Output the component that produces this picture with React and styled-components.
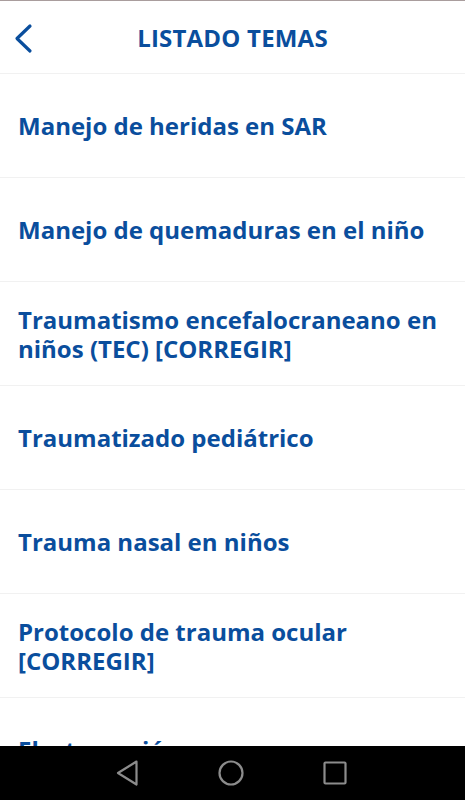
import React from "react";
import styled, { createGlobalStyle } from "styled-components";

const BLUE = "#0a4e9d";
const NAV_GREY = "#8c8c8c";

const topics = [
  "Manejo de heridas en SAR",
  "Manejo de quemaduras en el niño",
  "Traumatismo encefalocraneano en niños (TEC) [CORREGIR]",
  "Traumatizado pediátrico",
  "Trauma nasal en niños",
  "Protocolo de trauma ocular [CORREGIR]",
  "Electrocución",
];

const GlobalStyle = createGlobalStyle`
  html, body {
    margin: 0;
    padding: 0;
    background: #ffffff;
  }
  body {
    font-family: "Open Sans", "Noto Sans", sans-serif;
  }
`;

export default function App() {
  return (
    <>
      <GlobalStyle />
      <Screen>
        <StatusEdge />
        <Header>
          <BackButton aria-label="Volver">
            <svg width="20" height="32" viewBox="0 0 20 32">
              <path
                d="M16 4 L3 16.5 L16 29"
                fill="none"
                stroke={BLUE}
                strokeWidth="3.2"
                strokeLinecap="round"
                strokeLinejoin="round"
              />
            </svg>
          </BackButton>
          <Title>LISTADO TEMAS</Title>
        </Header>
        <List>
          {topics.map((t) => (
            <Item key={t}>
              <ItemText>{t}</ItemText>
            </Item>
          ))}
        </List>
        <NavBar>
          <NavSlot>
            <svg viewBox="0 0 24 26" width="24" height="26">
              <path
                d="M21.5 1.5 L3 13 L21.5 24.5 Z"
                fill="none"
                stroke={NAV_GREY}
                strokeWidth="2.2"
                strokeLinejoin="round"
              />
            </svg>
          </NavSlot>
          <NavSlot>
            <svg viewBox="0 0 28 28" width="28" height="28">
              <circle cx="14" cy="14" r="11.5" fill="none" stroke={NAV_GREY} strokeWidth="2.2" />
            </svg>
          </NavSlot>
          <NavSlot>
            <svg viewBox="0 0 24 24" width="24" height="24">
              <rect x="1.5" y="1.5" width="21" height="21" rx="1" fill="none" stroke={NAV_GREY} strokeWidth="2.2" />
            </svg>
          </NavSlot>
        </NavBar>
      </Screen>
    </>
  );
}

const Screen = styled.div`
  position: relative;
  width: 465px;
  height: 800px;
  overflow: hidden;
  background: #ffffff;
  display: flex;
  flex-direction: column;
`;

const StatusEdge = styled.div`
  height: 1px;
  flex-shrink: 0;
  background: #a99d9d;
`;

const Header = styled.header`
  position: relative;
  height: 72px;
  flex-shrink: 0;
  display: flex;
  align-items: center;
  justify-content: center;
  border-bottom: 1px solid #f1f1f1;
`;

const BackButton = styled.button`
  position: absolute;
  left: 14px;
  top: 21px;
  padding: 0;
  border: 0;
  background: none;
  display: flex;
`;

const Title = styled.h1`
  margin: 0;
  font-size: 24px;
  font-weight: 700;
  color: ${BLUE};
  letter-spacing: 0.2px;
`;

const List = styled.div`
  flex: 1;
  overflow: hidden;
`;

const Item = styled.div`
  height: 103px;
  border-bottom: 1px solid #f1f1f1;
  display: flex;
  align-items: center;
  padding: 0 18px;
`;

const ItemText = styled.span`
  font-size: 24px;
  font-weight: 700;
  line-height: 29px;
  color: ${BLUE};
`;

const NavBar = styled.nav`
  position: absolute;
  left: 0;
  right: 0;
  bottom: 0;
  height: 54px;
  background: #000000;
  display: flex;
  align-items: center;
  justify-content: center;
  padding-right: 3px;
`;

const NavSlot = styled.div`
  width: 104px;
  display: flex;
  align-items: center;
  justify-content: center;
`;
